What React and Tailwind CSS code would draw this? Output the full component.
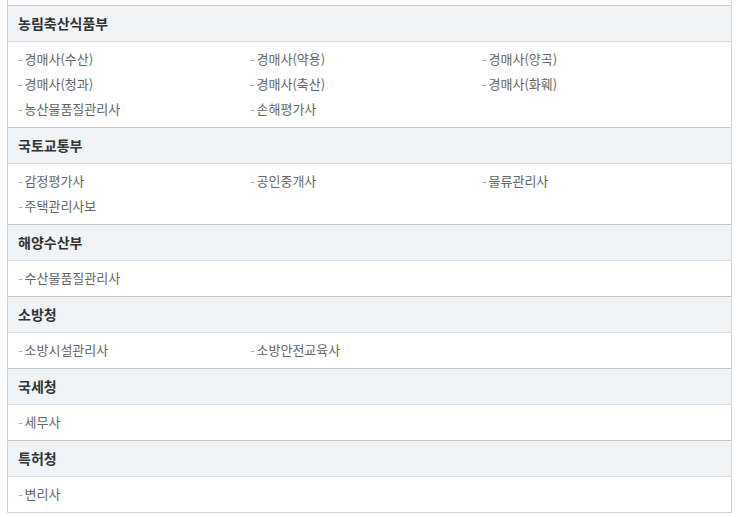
import React from "react";

const sections = [
  {
    title: "농림축산식품부",
    items: [
      "경매사(수산)",
      "경매사(약용)",
      "경매사(양곡)",
      "경매사(청과)",
      "경매사(축산)",
      "경매사(화훼)",
      "농산물품질관리사",
      "손해평가사",
    ],
  },
  { title: "국토교통부", items: ["감정평가사", "공인중개사", "물류관리사", "주택관리사보"] },
  { title: "해양수산부", items: ["수산물품질관리사"] },
  { title: "소방청", items: ["소방시설관리사", "소방안전교육사"] },
  { title: "국세청", items: ["세무사"] },
  { title: "특허청", items: ["변리사"] },
];

const App = () => {
  return (
    <div
      className="w-[739px] h-[517px] bg-white overflow-hidden"
      style={{ fontFamily: '"Noto Sans CJK KR", "Noto Sans", sans-serif' }}
    >
      <div className="ml-[7px] w-[725px] pt-[5px] border-x border-[#d4d4d4] border-b">
        {sections.map((section) => (
          <div key={section.title}>
            <div className="h-[36px] border-t border-[#c8c8c8] bg-[#f1f4f7] flex items-center px-[10px] pb-[1px]">
              <h3 className="text-[14px] font-bold text-[#333]">{section.title}</h3>
            </div>
            <ul className="border-t border-[#dcdcdc] py-[5px] pl-[10px] grid grid-cols-[232px_232px_232px]">
              {section.items.map((item) => (
                <li key={item} className="h-[25px] flex items-center text-[13px] text-[#666] pb-[1px]">
                  <span className="text-[#aaa] mr-[2px]">-</span>
                  {item}
                </li>
              ))}
            </ul>
          </div>
        ))}
      </div>
    </div>
  );
};

export default App;
